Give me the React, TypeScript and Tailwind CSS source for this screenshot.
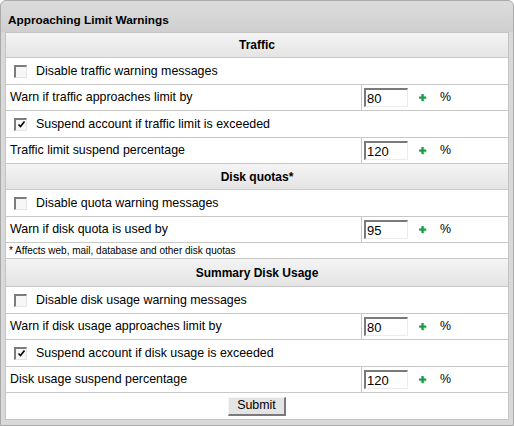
import React from "react";

const font = { fontFamily: '"Liberation Sans", Arial, sans-serif' };

function Check({ checked }: { checked?: boolean }) {
  return (
    <span className="inline-flex w-[13px] h-[13px] items-center justify-center border-t-2 border-l-2 border-[#7c7c7c] border-r border-b border-r-[#e4e4e4] border-b-[#e4e4e4] bg-[#f7f7f7]">
      {checked && (
        <svg width="9" height="9" viewBox="0 0 9 9">
          <path d="M1.5 4.5 L3.5 6.5 L7.5 1.5" fill="none" stroke="#000" strokeWidth="1.6" />
        </svg>
      )}
    </span>
  );
}

function Plus() {
  return (
    <svg width="9" height="9" viewBox="0 0 9 9" className="shrink-0">
      <path d="M4.5 1 V8 M1 4.5 H8" stroke="#9fcfae" strokeWidth="2.4" transform="translate(0.6 0.6)" />
      <path d="M4.5 1 V8 M1 4.5 H8" stroke="#1e9a4c" strokeWidth="2.2" />
    </svg>
  );
}

function Header({ title, h }: { title: string; h: string }) {
  return (
    <div
      className={`${h} flex items-center justify-center border-b border-[#c8c8c8] bg-[linear-gradient(#f4f4f4,#e4e4e4)] text-[12px] font-bold text-black`}
    >
      {title}
    </div>
  );
}

function CheckRow({ label, checked }: { label: string; checked?: boolean }) {
  return (
    <div className="h-[27px] flex items-center gap-[9px] pl-[8px] border-b border-[#c8c8c8] text-[12.4px]">
      <Check checked={checked} />
      <span>{label}</span>
    </div>
  );
}

function InputRow({ label, value }: { label: string; value: string }) {
  return (
    <div className="h-[26px] grid grid-cols-[1fr_147px] border-b border-[#c8c8c8] text-[12.4px]">
      <div className="flex items-center pl-[4px]">{label}</div>
      <div className="flex items-center border-l border-[#c8c8c8] pl-[2px]">
        <div className="w-[44px] h-[19px] flex items-center pl-[1px] border-t-2 border-l-2 border-[#7a7a7a] border-r border-b border-r-[#ececec] border-b-[#ececec] bg-white leading-none text-[13px]">
          {value}
        </div>
        <span className="ml-[10px]">
          <Plus />
        </span>
        <span className="ml-[13px]">%</span>
      </div>
    </div>
  );
}

export default function App() {
  return (
    <div style={font} className="w-[514px] h-[426px] bg-white text-black">
      <div className="w-[514px] h-[426px] flex flex-col border border-[#a9a9a9] rounded-t-[6px] bg-[#d9d9d9]">
        <div className="h-[31px] flex items-center pl-[7px] pt-[9px] bg-[linear-gradient(#dcdcdc,#cfcfcf)] rounded-t-[6px] text-[11.8px] font-bold">
          Approaching Limit Warnings
        </div>
        <div className="mx-[4px] border border-[#c4c4c4] bg-white">
          <Header title="Traffic" h="h-[25px]" />
          <CheckRow label="Disable traffic warning messages" />
          <InputRow label="Warn if traffic approaches limit by" value="80" />
          <CheckRow label="Suspend account if traffic limit is exceeded" checked />
          <InputRow label="Traffic limit suspend percentage" value="120" />
          <Header title="Disk quotas*" h="h-[26px]" />
          <CheckRow label="Disable quota warning messages" />
          <InputRow label="Warn if disk quota is used by" value="95" />
          <div className="h-[16px] flex items-center pl-[3px] border-b border-[#c8c8c8] text-[10px]">
            * Affects web, mail, database and other disk quotas
          </div>
          <Header title="Summary Disk Usage" h="h-[28px]" />
          <CheckRow label="Disable disk usage warning messages" />
          <InputRow label="Warn if disk usage approaches limit by" value="80" />
          <CheckRow label="Suspend account if disk usage is exceeded" checked />
          <InputRow label="Disk usage suspend percentage" value="120" />
          <div className="h-[26px] flex items-center justify-center">
            <button
              type="button"
              className="w-[58px] h-[19px] flex items-center justify-center bg-[#e4e4e4] border border-t-[#f4f4f4] border-l-[#f4f4f4] border-r-2 border-b-2 border-r-[#7a7a7a] border-b-[#7a7a7a] text-[12.4px]"
            >
              Submit
            </button>
          </div>
        </div>
      </div>
    </div>
  );
}
